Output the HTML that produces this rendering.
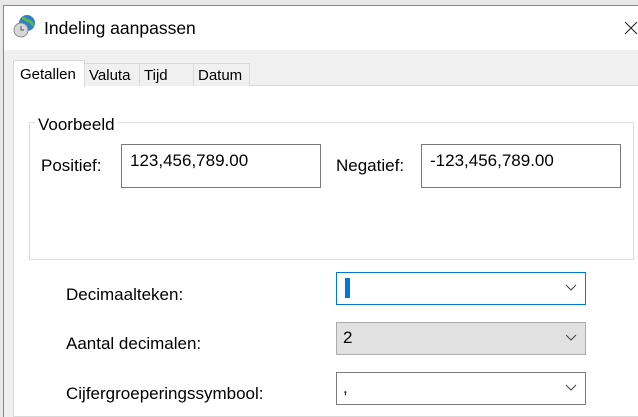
<!DOCTYPE html>
<html><head><style>
body{margin:0;width:638px;height:415px;overflow:hidden;background:#e8e8e8;font-family:"Liberation Sans",sans-serif;position:relative;color:#000}
.a{position:absolute}
.win{left:3px;top:5px;right:-2px;bottom:-2px;border-left:1px solid #8a8a8a;border-top:1px solid #8a8a8a;background:#f0f0f0}
.title{left:4px;top:6px;right:0;height:44px;background:#fff}
.t{font-size:17px}
.tab{height:23px;border:1px solid #d9d9d9;border-bottom:none;background:#f0f0f0;font-size:15px;padding-left:4px;box-sizing:border-box;line-height:24px}
.box{border:1px solid #7a7a7a;background:#fff;box-sizing:border-box;height:44px;font-size:17px;padding:6px 8px}
.cb{left:336px;width:250px;height:33px;box-sizing:border-box;font-size:17px;padding:5px 6px}
.chev{position:absolute;right:8px;top:11px}
</style></head><body>
<div class="a win"></div>
<div class="a title"></div>
<svg class="a" style="left:13px;top:14px" width="24" height="24" viewBox="0 0 24 24">
<circle cx="14" cy="9" r="8" fill="#2a7fd0"/><path d="M9 4c3 0 4 3 7 3s2 4 5 4" stroke="#5bb84a" stroke-width="3" fill="none"/>
<circle cx="8" cy="16" r="7" fill="#d8d8d8" stroke="#8a8a8a"/><path d="M8 12v4h3" stroke="#555" fill="none"/></svg>
<div class="a" style="left:44px;top:18px;font-size:17.5px">Indeling aanpassen</div>
<svg class="a" style="left:624px;top:21px" width="14" height="14"><path d="M1 1l12 12M13 1L1 13" stroke="#222" stroke-width="1"/></svg>
<div class="a" style="left:13px;top:85px;right:-2px;bottom:-2px;background:#fff;border:1px solid #d9d9d9"></div>
<div class="a tab" style="left:84px;top:63px;width:56px">Valuta</div>
<div class="a tab" style="left:139px;top:63px;width:55px">Tijd</div>
<div class="a tab" style="left:193px;top:63px;width:57px">Datum</div>
<div class="a tab" style="left:13px;top:60px;width:72px;height:27px;background:#fff;padding-left:6px;line-height:27px">Getallen</div>
<div class="a" style="left:29px;top:122px;width:603px;height:136px;border:1px solid #dcdcdc"></div>
<div class="a t" style="left:35px;top:115px;background:#fff;padding:0 3px">Voorbeeld</div>
<div class="a t" style="left:41px;top:156px">Positief:</div>
<div class="a box" style="left:121px;top:144px;width:200px">123,456,789.00</div>
<div class="a t" style="left:336px;top:156px">Negatief:</div>
<div class="a box" style="left:421px;top:144px;width:200px">-123,456,789.00</div>
<div class="a t" style="left:66px;top:285px">Decimaalteken:</div>
<div class="a t" style="left:66px;top:334px">Aantal decimalen:</div>
<div class="a t" style="left:66px;top:384px">Cijfergroeperingssymbool:</div>
<div class="a cb" style="top:272px;border:1px solid #0078d7;background:#fff"><span style="background:#0078d7;color:#fff;display:inline-block;width:5px;height:20px;margin-left:2px"></span><svg class="chev" width="12" height="8"><path d="M1 1l5 5 5-5" stroke="#444" fill="none"/></svg></div>
<div class="a cb" style="top:322px;border:1px solid #adadad;background:#e1e1e1">2<svg class="chev" width="12" height="8"><path d="M1 1l5 5 5-5" stroke="#444" fill="none"/></svg></div>
<div class="a cb" style="top:372px;border:1px solid #7a7a7a;background:#fff">,<svg class="chev" width="12" height="8"><path d="M1 1l5 5 5-5" stroke="#444" fill="none"/></svg></div>
</body></html>
